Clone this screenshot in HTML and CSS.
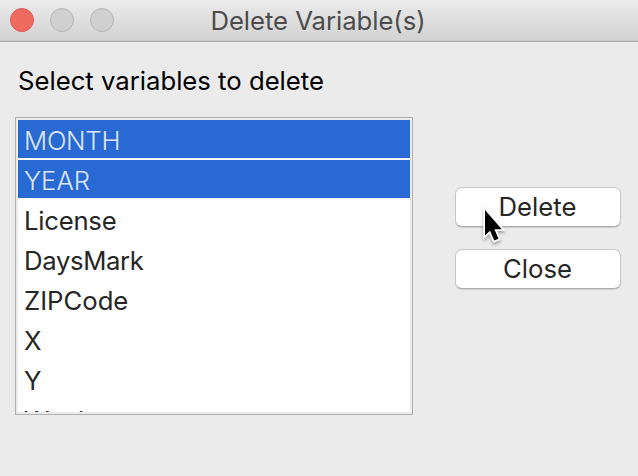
FILE: index.html
```html
<!DOCTYPE html>
<html lang="en">
<head>
<meta charset="utf-8">
<title>Delete Variable(s)</title>
<link rel="stylesheet" href="styles.css">
</head>
<body>
<div class="window">
  <header class="titlebar">
    <div class="lights"><span class="light light-close"></span><span class="light"></span><span class="light"></span></div>
    <h1 class="title">Delete Variable(s)</h1>
  </header>
  <main class="content">
    <section class="chooser">
      <p class="label">Select variables to delete</p>
      <ul class="list">
        <li class="row selected"><span class="month">MONTH</span></li>
        <li class="row selected"><span>YEAR</span></li>
        <li class="row"><span class="license">License</span></li>
        <li class="row"><span class="days">DaysMark</span></li>
        <li class="row"><span>ZIPCode</span></li>
        <li class="row"><span>X</span></li>
        <li class="row"><span>Y</span></li>
        <li class="row"><span>Week</span></li>
      </ul>
    </section>
    <div class="actions">
      <button class="button">Delete</button>
      <button class="button close">Close</button>
    </div>
  </main>
  <svg class="cursor" width="30" height="44" viewBox="0 0 30 44" aria-hidden="true">
    <path d="M5 6V31.5L10 26.7L14.3 36.6L18.6 34.8L14.4 25.2H21.8Z" fill="#000" stroke="#fff" stroke-width="3.6" paint-order="stroke" stroke-linejoin="miter"/>
  </svg>
</div>
</body>
</html>
```

FILE: styles.css
```css
* { box-sizing: border-box; }
body {
  margin: 0;
  overflow: hidden;
  background: #ebebeb;
  color: #262626;
  font: 25.7px/40px Inter, "Liberation Sans", sans-serif;
}
.window { position: relative; width: 638px; height: 476px; }
.titlebar {
  display: grid;
  grid-template-columns: 1fr auto 1fr;
  height: 42px;
  background: linear-gradient(#ebebeb, #d2d2d2);
  border-bottom: 1px solid #b0b0b0;
  box-shadow: inset 0 -1px #c5c5c5;
}
.lights { display: flex; gap: 16px; padding: 8px 0 0 10px; }
.light {
  width: 24px;
  height: 24px;
  border: 1px solid #b5b5b5;
  border-radius: 50%;
  background: #d0d0d0;
}
.light-close { background: #ef6b60; border-color: #dc5c53; }
.title {
  margin: 0 2px 0 0;
  font-size: 25.7px;
  font-weight: 400;
  line-height: 41px;
  letter-spacing: -0.04px;
  color: #4c4c4c;
}
.content { display: flex; gap: 42px; padding-left: 15px; }
.chooser { width: 398px; }
.label { margin: 19px 0 16px 3px; color: #000; white-space: nowrap; }
.list {
  height: 298px;
  margin: 0;
  padding: 2px;
  border: 1px solid #b0b0b0;
  outline: 2px solid #ebebeb;
  outline-offset: -3px;
  overflow: hidden;
  background: #fff;
  list-style: none;
}
.row { height: 38px; margin-bottom: 2px; padding-left: 6px; line-height: 41px; }
.selected { background: #2969d3; color: #dfe7f6; font-weight: 300; }
.month { letter-spacing: -0.25px; }
.license { letter-spacing: -0.25px; }
.days { letter-spacing: -0.35px; }
.actions { display: flex; flex-direction: column; gap: 22px; padding-top: 145px; }
.button {
  width: 166px;
  height: 40px;
  padding: 0 1px 0 0;
  border: 1px solid #c9c9c9;
  border-bottom-color: #adadad;
  border-radius: 7px;
  background: #fff;
  box-shadow: 0 1px 1px #0002;
  color: #262626;
  font: inherit;
  line-height: 38px;
}
.cursor { position: absolute; left: 480px; top: 204px; filter: drop-shadow(0 2px 1.5px #0005); }
```
